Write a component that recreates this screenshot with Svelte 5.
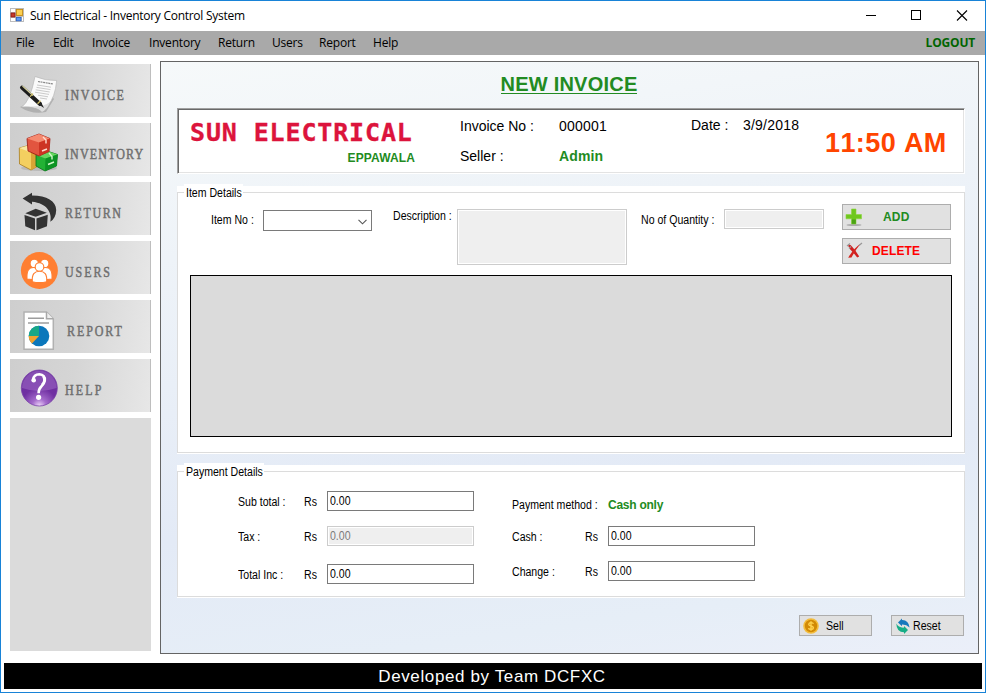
<script>
  const menu = [
    ['File', 37], ['Edit', 39], ['Invoice', 57], ['Inventory', 69],
    ['Return', 54], ['Users', 47], ['Report', 54], ['Help', 40]
  ];
  const nav = [
    ['Invoice', 2], ['Inventory', 1.4], ['Return', 2],
    ['Users', 2.4], ['Report', 2.4], ['Help', 2.7]
  ];
  const totals = [
    { label: 'Sub total :', off: false },
    { label: 'Tax :', off: true },
    { label: 'Total Inc :', off: false }
  ];
</script>

{#snippet navIcon(name)}
  <svg class="nav-icon" width="55" height="53" viewBox="0 0 55 53">
    {#if name === 'Invoice'}
      <path d="M10 43 Q22 51 36 48 L44 35 L40 30Z" fill="#888" opacity=".45" />
      <path d="M25 12.500 Q36 17 46.700 16.500 Q45 34 38 41 Q35 46 32 47.800 Q27 42 11.500 43 Q20 38 25 12.500Z" fill="#fafafa" stroke="#b9b9b9" stroke-width=".7" />
      <path d="M40 38 Q37 46 32 47.800 Q29 44 20 42.500 Q34 43 40 38Z" fill="#dedede" />
      <path d="M28 17.500 L43 20" stroke="#888" stroke-width="1.2" stroke-dasharray="2 .6" />
      <path d="M27 21l14 2.200M26.500 23.400l14 2.200M25.700 25.800l14 2.200M25 28.200l14 2.200M28 31.200l10 1.600M30 34l7 1" stroke="#c4c4c4" stroke-width=".9" />
      <path d="M12 23.500 L30 40" stroke="#1c1c1c" stroke-width="4" stroke-linecap="round" />
      <path d="M28 40 L34 44 L31 38Z" fill="#222" />
      <path d="M12.500 22 L23 31.500" stroke="#d5d2a0" stroke-width="1.1" />
      <path d="M20 32.600l3-3M27.500 39.800l3-3" stroke="#cdbd62" stroke-width="1.3" />
    {:else if name === 'Inventory'}
      <ellipse cx="29" cy="45" rx="18" ry="3" fill="#aaa" opacity=".6" />
      <path d="M9.3 25 L20 22 L28 26 V43 L21 47 L9.5 41Z" fill="#f3cf60" stroke="#a87c20" stroke-width=".8" />
      <path d="M9.3 25 L20 22 L28 26 L21 29.500Z" fill="#fae9a2" />
      <path d="M21 29.500 L28 26 V43 L21 47Z" fill="#d9a535" />
      <path d="M26 32 L37 28 L47.5 31.5 L46.500 43 L35 48 L26 43Z" fill="#22b234" stroke="#0b6d1b" stroke-width=".8" />
      <path d="M26 32 L37 28 L47.5 31.5 L35.5 35.500Z" fill="#66d860" />
      <path d="M35.5 35.500 L47.5 31.5 L46.500 43 L35 48Z" fill="#0c9424" />
      <path d="M38 41.500l6-2.500M39 30l3 3.500v3" stroke="#d5f8cd" stroke-width="1.4" fill="none" />
      <path d="M17 15.5 L29 11 L40 15.5 L39 28.5 L29 33 L18 28Z" fill="#e2553f" stroke="#98180f" stroke-width=".8" />
      <path d="M17 15.5 L29 11 L40 15.5 L29 19.500Z" fill="#f58a70" />
      <path d="M29 19.500 L40 15.5 L39 28.5 L29 33Z" fill="#cd3423" />
      <path d="M33 14l3 3v3.500M32 28l5-2" stroke="#ffdccf" stroke-width="1.4" fill="none" />
    {:else if name === 'Return'}
      <g fill="#333">
        <path d="M12.600 16.500 L22 10.700 V13.500 C37 13.500 46 19 46.200 28 Q46 36 40.300 39.800 C42.500 31 37 21 22 19.700 V22.500Z" />
        <path d="M15.300 31.300 L25.700 26.700 L36.800 30.800 L25.700 34.800Z" />
        <path d="M14.500 33 L25 36.500 V48.300 L15.300 44.200Z" />
        <path d="M26.500 36.500 L37.800 32.800 L37 44.200 L26.500 48.300Z" />
      </g>
    {:else if name === 'Users'}
      <circle cx="29.4" cy="29.5" r="18.5" fill="#ff7f32" />
      <g fill="#fff" stroke="#ff7f32" stroke-width="1.1">
        <circle cx="24.300" cy="22.4" r="4.2" />
        <circle cx="34.700" cy="22.4" r="4.2" />
        <path d="M17 38 C16.500 30 18.500 26.500 23.5 26.5 Q27 26.5 28 30 L27 39Z" />
        <path d="M42 38 C42.500 30 40.500 26.500 35.5 26.5 Q32 26.5 31 30 L32 39Z" />
        <circle cx="29.5" cy="26" r="4.300" />
        <path d="M22.300 40.8 C21.700 33 24.500 30.200 29.5 30.200 S37.300 33 36.700 40.8 Q29.500 42.500 22.300 40.8Z" />
      </g>
    {:else if name === 'Report'}
      <path d="M14 12 H36.5 L43.3 18.8 V49.3 H14Z" fill="#fff" stroke="#b1b1b1" stroke-width="1.5" />
      <path d="M36.5 12 V18.8 H43.3" fill="#eee" stroke="#a8a8a8" stroke-width="1.5" />
      <path d="M18 18.2h16M18 22.9h21" stroke="#9d9d9d" stroke-width="1.5" />
      <circle cx="29" cy="36" r="10.3" fill="#0b77bb" />
      <path d="M29 36 V25.7 A10.3 10.3 0 0 0 18.7 36Z" fill="#16a786" />
      <path d="M29 36 H18.7 A10.3 10.3 0 0 0 22 43.5Z" fill="#f0a22e" />
    {:else}
      <defs>
        <radialGradient id="orb" cx=".5" cy="1" r="1">
          <stop offset="0" stop-color="#f0d8fb" /><stop offset=".2" stop-color="#a56ccc" />
          <stop offset=".5" stop-color="#7030a2" /><stop offset="1" stop-color="#6a2d9e" />
        </radialGradient>
      </defs>
      <circle cx="29.3" cy="29" r="18" fill="url(#orb)" stroke="#7a43a8" stroke-width=".8" />
      <path d="M12 29 A17 17 0 0 1 46.600 29 Q29 35 12 29Z" fill="#b98ddb" opacity=".35" />
      <path d="M23 21 Q23.800 15.300 29.300 15.300 Q35.300 15.800 34.800 21.500 Q34.300 24.800 31.300 27.500 Q28.600 30 28.600 34.200" fill="none" stroke="#fff" stroke-width="2.600" />
      <path d="M33.500 17.500Q36 22 32 26" fill="none" stroke="#fff" stroke-width="2.600" />
      <circle cx="23.700" cy="21.300" r="2.300" fill="#fff" />
      <circle cx="28.6" cy="38.300" r="2.6" fill="#fff" />
    {/if}
  </svg>
{/snippet}

<div class="window">
  <header class="titlebar">
    <svg class="app-icon" width="14" height="14" viewBox="0 0 14 14">
      <rect width="14" height="14" fill="#bdbdbd" />
      <path d="M1 1h4v3H1zM1 10h4v3H1zM12 9h1v4h-1z" fill="#fff" />
      <rect x="1" y="5" width="4" height="4" fill="#c43a2a" stroke="#8d1a14" stroke-width=".8" />
      <rect x="6.4" y="1.4" width="6.2" height="6" fill="#fbd052" stroke="#c58a12" stroke-width=".9" />
      <rect x="6.4" y="9.4" width="4.6" height="3.4" fill="#5b9bf0" stroke="#2a62c9" stroke-width=".8" />
    </svg>
    <span class="title">Sun Electrical - Inventory Control System</span>
    <svg class="controls" width="120" height="30" viewBox="0 0 120 30" fill="none" stroke="#000" shape-rendering="crispEdges">
      <path d="M4 14.5h10" />
      <rect x="49.5" y="9.5" width="9" height="9" />
      <path d="M95 9.5l10 10M105 9.5l-10 10" shape-rendering="auto" stroke-width="1.1" />
    </svg>
  </header>

  <nav class="menubar">
    {#each menu as [label, width]}
      <span style:width="{width}px">{label}</span>
    {/each}
    <b>LOGOUT</b>
  </nav>

  <div class="body">
    <aside>
      {#each nav as [name, spacing]}
        <div class="nav-button">
          {@render navIcon(name)}
          <span class:shifted={name === 'Report'} style:letter-spacing="{spacing}px">{name.toUpperCase()}</span>
        </div>
      {/each}
      <div class="filler"></div>
    </aside>

    <main>
      <h1><span>NEW INVOICE</span></h1>

      <section class="banner">
        <div class="brand">
          <div class="brand-name">SUN ELECTRICAL</div>
          <div class="brand-town">EPPAWALA</div>
        </div>
        <div class="meta">
          <span>Invoice No :</span><span class="spaced">000001</span>
          <span class="date">Date :</span><span class="date spaced">3/9/2018</span>
          <span class="seller">Seller :</span><b class="seller">Admin</b>
        </div>
        <div class="clock">11:50 AM</div>
      </section>

      <section class="group items">
        <div class="frame">
          <div class="legend" style:width="59px"><span class="t">Item Details</span></div>
          <div class="item-row">
            <div class="lbl item-no"><span class="t">Item No :</span></div>
            <div class="combo">
              <svg width="9" height="6" viewBox="0 0 9 6"><path d="M.5 .8l4 4 4-4" fill="none" stroke="#555" stroke-width="1.1" /></svg>
            </div>
            <div class="lbl desc"><span class="t">Description :</span></div>
            <div class="field off desc-box"></div>
            <div class="lbl qty"><span class="t">No of Quantity :</span></div>
            <div class="field off qty-box"></div>
            <div class="actions">
              <div class="btn add">
                <svg width="18" height="19" viewBox="0 0 18 19">
                  <ellipse cx="9" cy="17" rx="7.500" ry="1" fill="#aaa" />
                  <path d="M6.500 1h4.500v5.500h5.500v4.300h-5.500V16H6.500v-5.200H1V6.500h5.500z" fill="#6fc71e" stroke="#8bd53e" stroke-width=".6" />
                  <path d="M6.800 11.500h4v4.300h-4z" fill="#4ba314" />
                </svg>
                <b>ADD</b>
              </div>
              <div class="btn delete">
                <svg width="17" height="18" viewBox="0 0 17 18">
                  <path d="M2 3.500 Q4 1.500 6 4.500 Q10 9 13.200 14.500 L11.200 15.500 Q7 10 3.800 7Z" fill="#cf2020" />
                  <path d="M14.800 1.500 Q10 7 5.500 15.500 L2.200 15.800 Q7 7 14.800 1.500Z" fill="#d42620" />
                  <path d="M1 4l3-2.500M3 6.500l2-2M13 3.500l3-2.500" stroke="#999" stroke-width="1.2" />
                </svg>
                <b>DELETE</b>
              </div>
            </div>
          </div>
          <div class="table"></div>
        </div>
      </section>

      <section class="group payment">
        <div class="frame">
          <div class="legend" style:width="80px"><span class="t">Payment Details</span></div>
          <div class="pay">
            <div class="pay-left">
              {#each totals as row}
                <div class="lbl"><span class="t">{row.label}</span></div>
                <div class="lbl"><span class="t">Rs</span></div>
                <div class="field" class:off={row.off}><span class="t">0.00</span></div>
              {/each}
            </div>
            <div class="pay-right">
              <div class="lbl method"><span class="t">Payment method :</span></div>
              <b class="method">Cash only</b>
              {#each ['Cash :', 'Change :'] as label}
                <div class="lbl"><span class="t">{label}</span></div>
                <div class="lbl"><span class="t">Rs</span></div>
                <div class="field"><span class="t">0.00</span></div>
              {/each}
            </div>
          </div>
        </div>
      </section>

      <div class="commands">
        <div class="btn sell">
          <svg width="16" height="16" viewBox="0 0 16 16">
            <circle cx="8" cy="8" r="7.8" fill="#f3bd3c" />
            <circle cx="8" cy="8" r="6.200" fill="#d28a05" />
            <path d="M10.500 5.800Q10 4.600 8 4.600T5.700 6.300Q5.800 7.700 8 8T10.400 9.800Q10.200 11.400 8 11.400T5.500 10.100M8 3.300v9.400" fill="none" stroke="#ffd34f" stroke-width="1.400" />
          </svg>
          <span class="t">Sell</span>
        </div>
        <div class="btn reset">
          <svg width="14" height="16" viewBox="0 0 14 16">
            <path d="M2 4.500L6 .4V2Q12.500 1.800 13.600 9.500Q10.500 6.200 6 6.400V8.200Z" fill="#1678bd" />
            <path d="M.3 5.500Q2.500 10 8 9.600V8L12 12 8 16V14.300Q.6 14.300 .3 5.500Z" fill="#17ad86" />
          </svg>
          <span class="t">Reset</span>
        </div>
      </div>
    </main>
  </div>

  <footer>Developed by Team DCFXC</footer>
</div>

<style>
  .window, .window * { box-sizing: border-box; }
  .window {
    width: 986px; height: 693px; border: 1px solid #1883d7; background: #fff; color: #000;
    display: flex; flex-direction: column; overflow: hidden;
    font: 12px/20px "Liberation Sans", Arial, sans-serif; white-space: nowrap;
  }
  svg { display: block; flex: none; }
  .t { display: inline-block; transform: scaleX(.88); transform-origin: 0 50%; }

  .titlebar { height: 30px; flex: none; display: flex; padding-left: 9px; font-family: "Open Sans", "Noto Sans", sans-serif; }
  .app-icon { margin-top: 7px; }
  .title { margin-left: 6px; line-height: 29px; letter-spacing: -.27px; }
  .controls { margin-left: auto; margin-right: 3px; }
  .menubar {
    height: 24px; flex: none; display: flex; padding: 0 10px 0 15px; background: #a9a9a9;
    font-family: "Open Sans", "Noto Sans", sans-serif; line-height: 23px; letter-spacing: -.2px;
  }
  .menubar b { margin-left: auto; color: #006400; letter-spacing: -.2px; }

  .body { display: flex; height: 608px; flex: none; }
  aside { width: 141px; margin: 9px 9px 0; display: flex; flex-direction: column; gap: 6px; }
  .nav-button {
    height: 53px; flex: none; display: flex; border-right: 1px solid #bebebe;
    background: linear-gradient(98deg, #cecece, #d5d5d5 45%, #e7e7e7);
  }
  .nav-button span {
    font: 15px/20px "Liberation Serif", "Times New Roman", serif; color: #6f6f6f;
    -webkit-text-stroke: .5px #6f6f6f; margin-top: 21px; height: 20px;
    transform: scaleX(.8); transform-origin: 0 50%; width: 80px;
  }
  .nav-button span.shifted { margin-left: 2px; }
  .filler { height: 233px; background: #dbdbdb; }

  main {
    width: 819px; height: 593px; margin-top: 6px; border: 1px solid #646464; padding: 0 13px 0 16px;
    background: linear-gradient(172deg, #f6f9fa, #eef3f8 28%, #e3eaf6 68%, #e6eef7 88%, #ebeff9);
  }
  h1 { margin: 0; height: 46px; padding-top: 10px; text-align: center; font-size: 20px; line-height: 24px; color: #228b22; letter-spacing: .22px; }
  h1 span { display: inline-block; height: 22px; border-bottom: 1px solid #228b22; margin-right: 4px; }

  .banner {
    height: 66px; width: 788px; background: #fff; display: flex; border: 1px solid; border-color: #a0a0a0 #fff #fff #a0a0a0;
    box-shadow: inset 1px 1px #696969, inset -1px -1px #e3e3e3;
  }
  .brand { width: 282px; padding: 10px 0 0 12px; }
  .brand-name { font: bold 25px/28px "DejaVu Sans Mono", monospace; letter-spacing: .86px; color: #dc143c; -webkit-text-stroke: .3px #dc143c; }
  .brand-town { width: 225px; text-align: right; font-weight: bold; line-height: 22px; color: #228b22; letter-spacing: .12px; }
  .meta { width: 365px; padding-top: 3px; display: grid; grid-template: 30px 30px / 99px 132px 52px 82px; font-size: 14px; line-height: 29px; }
  .meta b { color: #228b22; letter-spacing: .15px; }
  .meta .spaced { letter-spacing: .22px; }
  .meta .date { line-height: 27px; }
  .meta .seller { line-height: 28px; }
  .clock { font-size: 27px; font-weight: bold; line-height: 68px; color: #ff4500; letter-spacing: .4px; font-kerning: none; }

  .group { width: 788px; background: #fff; padding: 6px 0 1px; }
  .items { height: 268px; margin-top: 12px; }
  .payment { height: 133px; margin-top: 11px; }
  .frame { position: relative; height: 100%; border: 1px solid #dcdcdc; }
  .legend { position: absolute; left: 6px; top: -9px; height: 18px; line-height: 19px; padding-left: 2px; background: #fff; }

  .item-row { height: 82px; display: flex; align-items: flex-start; }
  .lbl { height: 20px; line-height: 21px; }
  .item-no { margin: 17px 0 0 33px; width: 52px; }
  .combo { margin-top: 17px; width: 109px; height: 21px; border: 1px solid #7a7a7a; display: flex; justify-content: flex-end; padding: 8px 4px 0; }
  .desc { margin: 13px 0 0 21px; width: 64px; }
  .field { width: 147px; height: 20px; border: 1px solid #7a7a7a; background: #fff; padding-left: 2px; line-height: 19px; }
  .field.off { border-color: #ccc; background: #efefef; box-shadow: inset 0 0 0 1px #fff; color: #7a7a7a; }
  .desc-box { margin-top: 16px; width: 170px; height: 56px; }
  .qty { margin: 17px 0 0 14px; width: 83px; }
  .qty-box { margin-top: 16px; width: 100px; }
  .actions { margin: 11px 0 0 18px; display: flex; flex-direction: column; gap: 8px; }
  .btn { height: 26px; width: 109px; display: flex; background: #e1e1e1; border: 1px solid #adadad; }
  .btn b { line-height: 24px; letter-spacing: .15px; }
  .add svg { margin: 3px 0 0 2px; }
  .add b { color: #228b22; margin-left: 20px; }
  .delete svg { margin: 3px 0 0 3px; }
  .delete b { color: #f00; margin-left: 9px; }
  .table { margin-left: 12px; width: 762px; height: 162px; border: 1px solid #000; background: #dbdbdb; }

  .pay { display: flex; padding-left: 60px; }
  .pay .lbl { line-height: 23px; }
  .pay-left { margin-top: 19px; display: grid; grid-template: 35px 38px 20px / 66px 23px 147px; }
  .pay-right { margin: 22px 0 0 38px; display: grid; grid-template: 32px 35px 20px / 73px 23px 147px; }
  .method.lbl { grid-column: 1 / 3; }
  b.method { color: #228b22; line-height: 23px; letter-spacing: -.25px; }

  .commands { display: flex; gap: 19px; margin: 17px 0 0 622px; }
  .commands .btn { width: 73px; height: 21px; line-height: 20px; }
  .sell svg { margin: 2px 0 0 3px; }
  .sell .t { margin-left: 7px; }
  .reset svg { margin: 2px 0 0 4px; }
  .reset .t { margin-left: 3px; }

  footer { margin: 0 3px; height: 26px; background: #000; color: #fff; text-align: center; font-size: 17px; line-height: 28px; letter-spacing: .62px; padding-right: 2px; }
</style>
